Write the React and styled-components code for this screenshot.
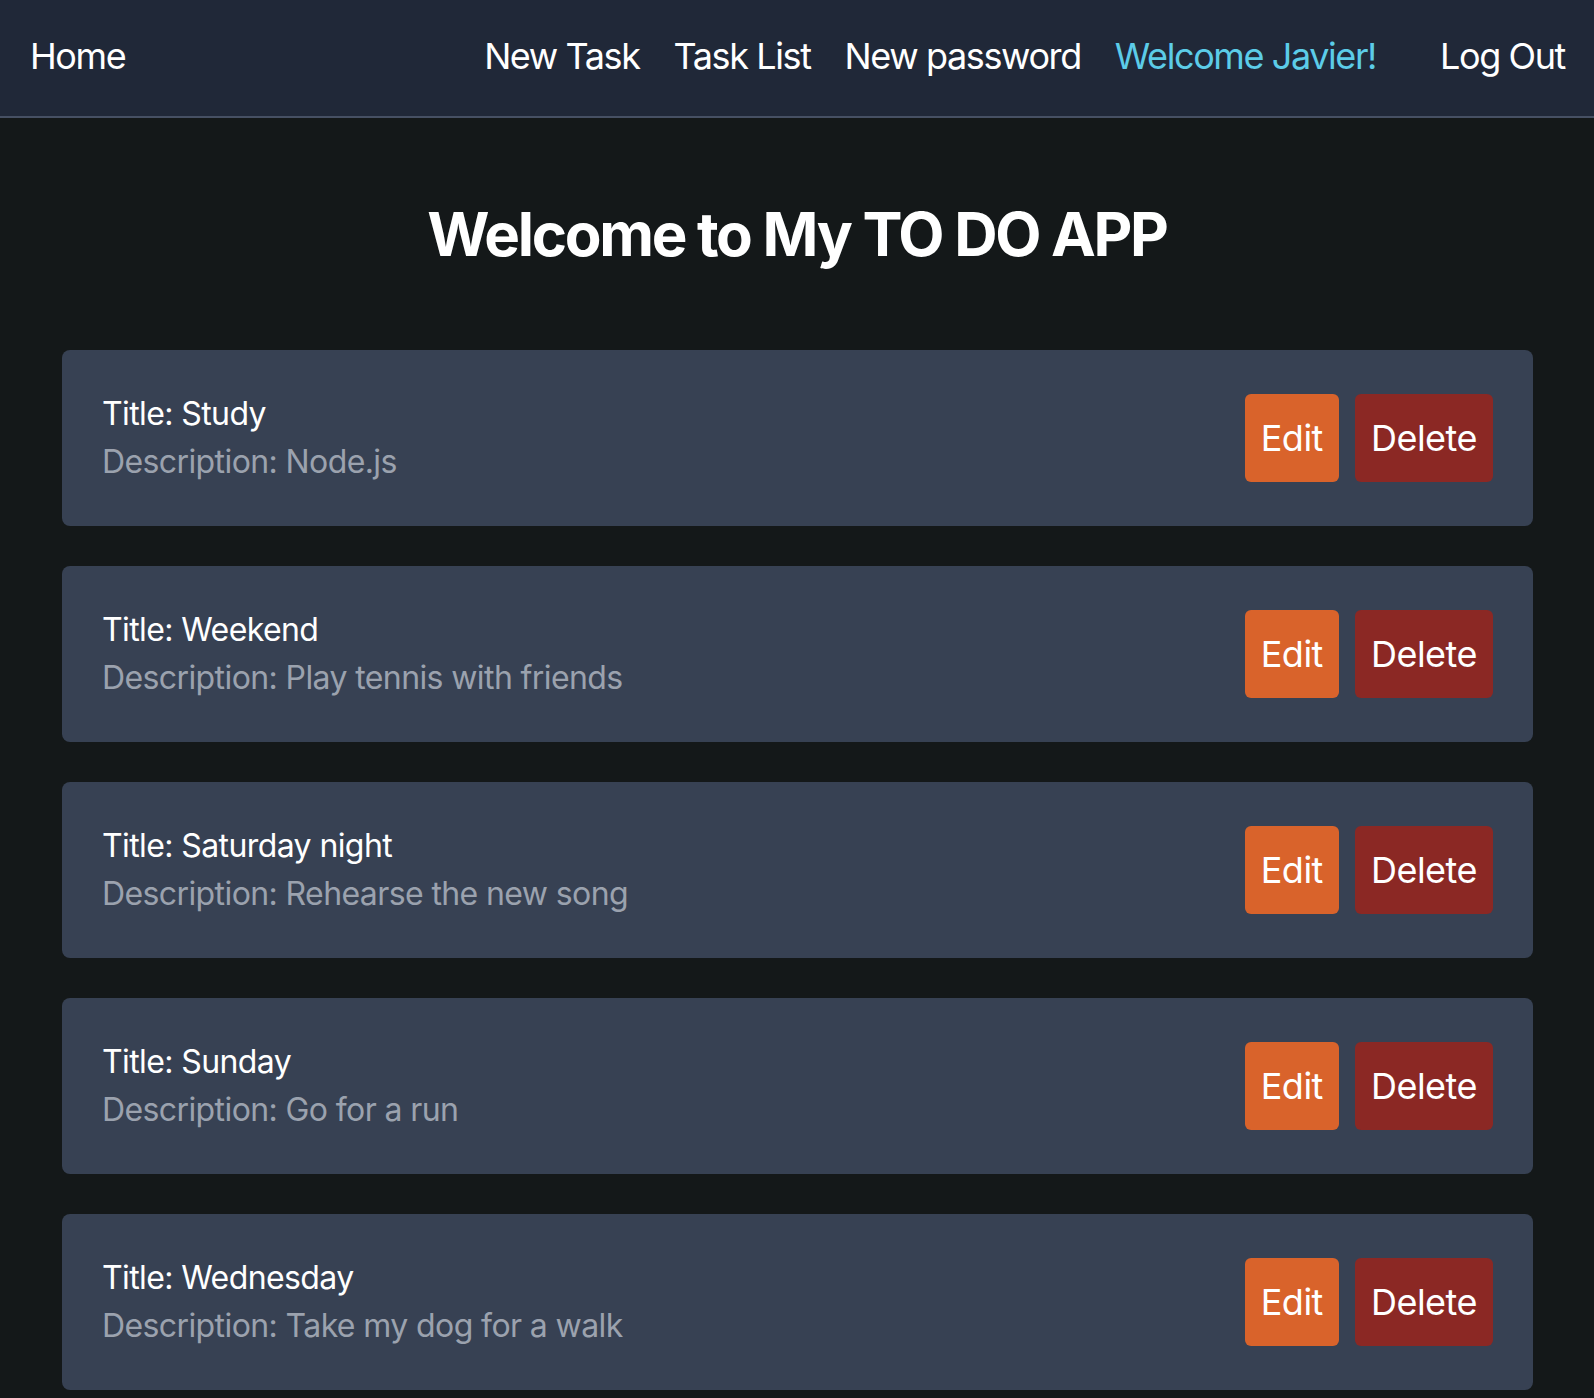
import React from "react";
import styled, { createGlobalStyle } from "styled-components";

const GlobalStyle = createGlobalStyle`
  * { box-sizing: border-box; }
  html, body { margin: 0; padding: 0; }
  body {
    background: #141819;
    font-family: Inter, "Noto Sans", "Liberation Sans", sans-serif;
    color: #ffffff;
  }
`;

const Page = styled.div`
  min-height: 100vh;
  background: #141819;
`;

const NavBar = styled.nav`
  display: flex;
  align-items: center;
  justify-content: space-between;
  background: #202838;
  border-bottom: 2px solid #465063;
  padding: 36px 29px 40px 30px;
`;

const NavLink = styled.a`
  font-size: 36px;
  line-height: 40px;
  letter-spacing: -1.4px;
  color: ${(p) => (p.$accent ? "#5ccce8" : "#ffffff")};
  text-decoration: none;
  cursor: pointer;
  white-space: nowrap;
`;

const NavGroup = styled.div`
  display: flex;
  align-items: center;
  gap: 34px;
`;

const UserGroup = styled.div`
  display: flex;
  align-items: center;
  gap: 64px;
`;

const Heading = styled.h1`
  margin: 86px 0;
  text-align: center;
  font-size: 60px;
  line-height: 60px;
  font-weight: 700;
  letter-spacing: -2.3px;
`;

const List = styled.div`
  display: flex;
  flex-direction: column;
  gap: 40px;
  padding: 0 61px 0 62px;
`;

const Card = styled.div`
  display: flex;
  align-items: center;
  justify-content: space-between;
  background: #374153;
  border-radius: 8px;
  padding: 40px;
`;

const Info = styled.div`
  display: flex;
  flex-direction: column;
`;

const Line = styled.p`
  margin: 0;
  font-size: 32px;
  line-height: 48px;
  letter-spacing: -0.6px;
  color: ${(p) => (p.$muted ? "#9ba2ae" : "#ffffff")};
`;

const Actions = styled.div`
  display: flex;
  gap: 16px;
`;

const Button = styled.button`
  border: none;
  border-radius: 6px;
  padding: 24px 16px;
  font-family: inherit;
  font-size: 36px;
  line-height: 40px;
  letter-spacing: -0.5px;
  color: #ffffff;
  background: ${(p) => (p.$danger ? "#8b2824" : "#d9632b")};
  cursor: pointer;
`;

const tasks = [
  { title: "Study", description: "Node.js" },
  { title: "Weekend", description: "Play tennis with friends" },
  { title: "Saturday night", description: "Rehearse the new song" },
  { title: "Sunday", description: "Go for a run" },
  { title: "Wednesday", description: "Take my dog for a walk" },
];

export default function App() {
  return (
    <Page>
      <GlobalStyle />
      <NavBar>
        <NavLink>Home</NavLink>
        <NavGroup>
          <NavLink>New Task</NavLink>
          <NavLink>Task List</NavLink>
          <NavLink>New password</NavLink>
          <UserGroup>
            <NavLink $accent>Welcome Javier!</NavLink>
            <NavLink>Log Out</NavLink>
          </UserGroup>
        </NavGroup>
      </NavBar>
      <Heading>Welcome to My TO DO APP</Heading>
      <List>
        {tasks.map((t) => (
          <Card key={t.title}>
            <Info>
              <Line>Title: {t.title}</Line>
              <Line $muted>Description: {t.description}</Line>
            </Info>
            <Actions>
              <Button>Edit</Button>
              <Button $danger>Delete</Button>
            </Actions>
          </Card>
        ))}
      </List>
    </Page>
  );
}
